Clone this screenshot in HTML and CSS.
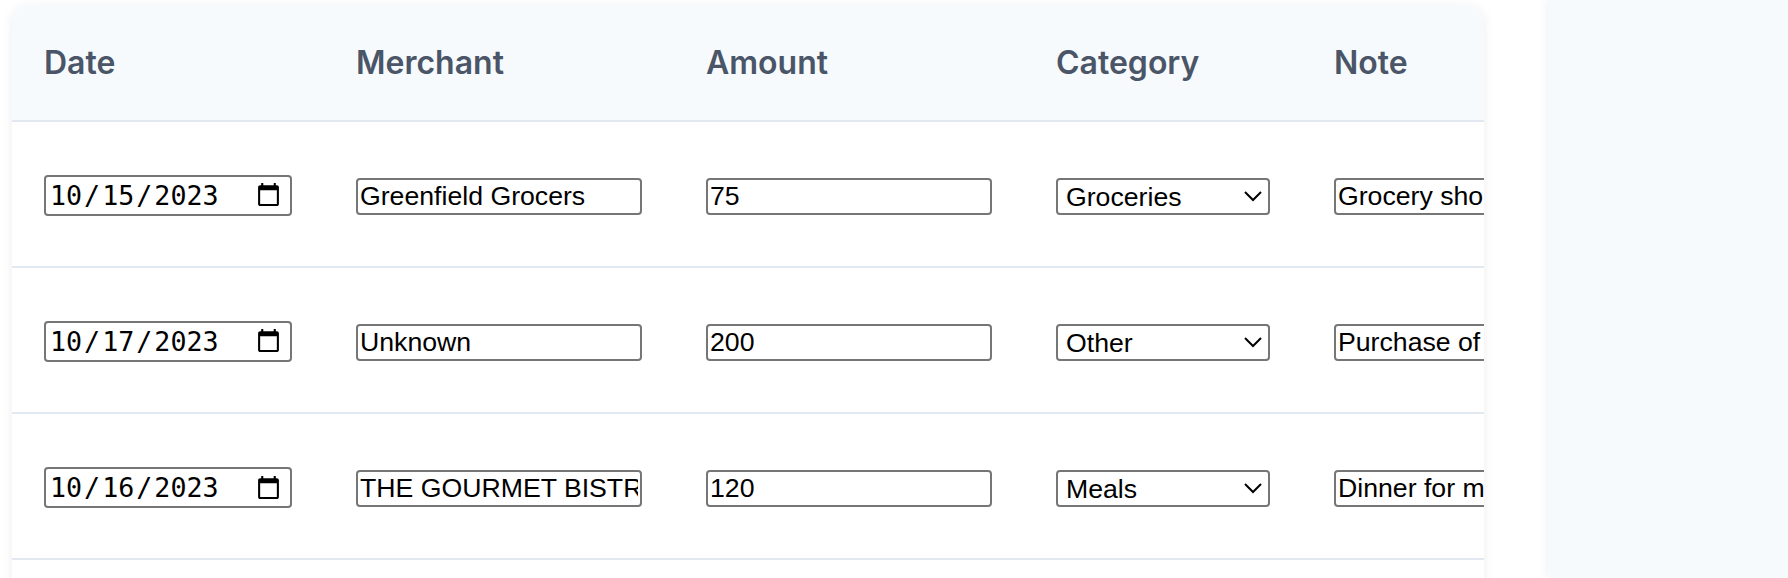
FILE: index.html
```html
<!DOCTYPE html>
<html lang="en">
<head>
<meta charset="utf-8">
<title>Expenses</title>
<link rel="stylesheet" href="styles.css">
</head>
<body>
<div class="page">
  <main class="main">
    <div class="card">
      <table class="tx">
        <thead>
          <tr><th>Date</th><th>Merchant</th><th>Amount</th><th>Category</th><th>Note</th></tr>
        </thead>
        <tbody>
          <tr>
            <td><input class="in-date" type="date" value="2023-10-15"></td>
            <td><input class="in-text" type="text" value="Greenfield Grocers"></td>
            <td><input class="in-text" type="text" value="75"></td>
            <td><select class="in-select"><option selected>Groceries</option><option>Meals</option><option>Other</option></select></td>
            <td><input class="in-text" type="text" value="Grocery shopping for the week"></td>
          </tr>
          <tr>
            <td><input class="in-date" type="date" value="2023-10-17"></td>
            <td><input class="in-text" type="text" value="Unknown"></td>
            <td><input class="in-text" type="text" value="200"></td>
            <td><select class="in-select"><option>Groceries</option><option>Meals</option><option selected>Other</option></select></td>
            <td><input class="in-text" type="text" value="Purchase of office supplies"></td>
          </tr>
          <tr>
            <td><input class="in-date" type="date" value="2023-10-16"></td>
            <td><input class="in-text" type="text" value="THE GOURMET BISTRO"></td>
            <td><input class="in-text" type="text" value="120"></td>
            <td><select class="in-select"><option>Groceries</option><option selected>Meals</option><option>Other</option></select></td>
            <td><input class="in-text" type="text" value="Dinner for meeting with client"></td>
          </tr>
          <tr>
            <td><input class="in-date" type="date" value="2023-10-18"></td>
            <td><input class="in-text" type="text" value="City Transit"></td>
            <td><input class="in-text" type="text" value="45"></td>
            <td><select class="in-select"><option>Groceries</option><option>Meals</option><option selected>Other</option></select></td>
            <td><input class="in-text" type="text" value="Monthly pass"></td>
          </tr>
        </tbody>
      </table>
    </div>
  </main>
  <aside class="panel"></aside>
</div>
</body>
</html>
```
FILE: styles.css
```css
html, body {
  margin: 0;
  padding: 0;
  background: #ffffff;
  overflow: hidden;
}
.page {
  zoom: 2;
  display: flex;
  height: 289px;
}
.main {
  flex: 1;
  min-width: 0;
  padding: 2.5px 32px 0 6px;
}
.card {
  background: #ffffff;
  border-radius: 8px;
  box-shadow: 0 1px 6px rgba(0, 0, 0, 0.07);
  overflow: hidden;
  height: 400px;
}
.panel {
  width: 120px;
  flex: none;
  background: #f7fafc;
  box-shadow: -1px 0 4px rgba(0, 0, 0, 0.05);
}
.tx {
  border-collapse: collapse;
}
.tx th {
  background: #f7fafc;
  color: #4a5568;
  font-family: Inter, "Liberation Sans", sans-serif;
  font-weight: 600;
  font-size: 16px;
  line-height: 24px;
  text-align: left;
  padding: 17px 16px 16.5px;
  border-bottom: 1px solid #e2e8f0;
  white-space: nowrap;
}
.tx td {
  padding: 26px 16px 25px;
  border-bottom: 1px solid #e2e8f0;
}
.in-date, .in-text, .in-select {
  vertical-align: middle;
}
.in-text, .in-select {
  font-family: "Liberation Sans", Arial, sans-serif;
  font-size: 13.333px;
  color: #000000;
}
.in-date {
  width: 124px;
  height: 20.5px;
  box-sizing: border-box;
  padding: 1px 2px 1px 1px;
  border: 1px solid #767676;
  border-radius: 2px;
  color: #000000;
}
.in-text {
  width: 143px;
  height: 18.5px;
  box-sizing: border-box;
  padding: 0 1px;
  border: 1px solid #767676;
  border-radius: 2px;
}
.in-select {
  width: 107px;
  height: 18.5px;
  box-sizing: border-box;
  border: 1px solid #767676;
  border-radius: 2px;
  background-color: #ffffff;
}
```
